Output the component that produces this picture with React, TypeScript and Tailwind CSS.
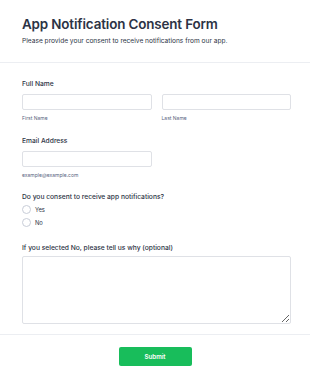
export default function App() {
  return (
    <div className="min-h-[383px] w-[310px] bg-white font-['Inter',sans-serif] text-[#2c3345]">
      <header className="border-b border-[#eceef2] pb-[16px] pl-[22px] pr-[19px] pt-[14px]">
        <h1 className="text-[13.4px] font-semibold leading-[20px] tracking-[-0.01em]">
          App Notification Consent Form
        </h1>
        <p className="mt-[3px] text-[6.6px] leading-[9px] text-[#2c3345]">
          Please provide your consent to receive notifications from our app.
        </p>
      </header>

      <form className="pl-[22px] pr-[19px] pt-[16px]">
        <div>
          <label className="block text-[6.7px] font-medium leading-[10px]">Full Name</label>
          <div className="mt-[5px] grid grid-cols-2 gap-[10px]">
            <div>
              <input className="block h-[16px] w-full rounded-[2px] border border-[#dfe1e6]" />
              <span className="mt-[5px] block text-[5px] leading-[7px] text-[#57647e]">First Name</span>
            </div>
            <div>
              <input className="block h-[16px] w-full rounded-[2px] border border-[#dfe1e6]" />
              <span className="mt-[5px] block text-[5px] leading-[7px] text-[#57647e]">Last Name</span>
            </div>
          </div>
        </div>

        <div className="mt-[14px]">
          <label className="block text-[6.7px] font-medium leading-[10px]">Email Address</label>
          <div className="mt-[5px] grid grid-cols-2 gap-[10px]">
            <div>
              <input className="block h-[16px] w-full rounded-[2px] border border-[#dfe1e6]" />
              <span className="mt-[5px] block text-[5px] leading-[7px] text-[#57647e]">example@example.com</span>
            </div>
          </div>
        </div>

        <div className="mt-[13px]">
          <p className="text-[6.7px] font-medium leading-[10px]">Do you consent to receive app notifications?</p>
          <div className="mt-[3px] flex flex-col gap-[4px]">
            {["Yes", "No"].map((opt) => (
              <label key={opt} className="flex items-center gap-[4px]">
                <span className="block size-[9px] rounded-full border border-[#c8cdd8] bg-white" />
                <span className="text-[5.8px] leading-[9px] text-[#2c3345]">{opt}</span>
              </label>
            ))}
          </div>
        </div>

        <div className="mt-[16px]">
          <label className="block text-[6.7px] font-medium leading-[10px]">
            If you selected No, please tell us why (optional)
          </label>
          <textarea className="mt-[3px] block h-[68px] w-full resize-y rounded-[2px] border border-[#dfe1e6]" />
        </div>
      </form>

      <div className="mt-[10px] border-t border-[#eceef2] pt-[12px]">
        <div className="flex justify-center">
          <button
            type="button"
            className="h-[19px] w-[73px] rounded-[2px] bg-[#18bd5b] text-[6.2px] font-semibold text-white"
          >
            Submit
          </button>
        </div>
      </div>
    </div>
  );
}
